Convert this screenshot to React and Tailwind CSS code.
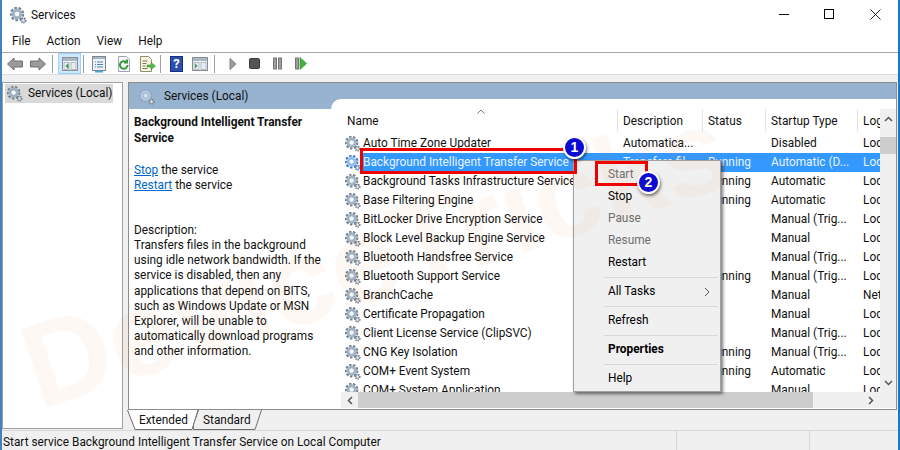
import React from "react";

function Gear({ size = 16, dim = false, dense = false }) {
  const teeth = dense ? "#3d78c4" : dim ? "#8fa6bf" : "#76828e";
  const ring = dense ? "#9cc4ee" : dim ? "#b6cbdf" : "#9fb4c9";
  return (
    <svg width={size} height={size} viewBox="0 0 16 16" className="shrink-0">
      <circle cx="6.6" cy="6.6" r="5.2" fill="none" stroke={teeth} strokeWidth="3.2" strokeDasharray="2.2 1.4" />
      <circle cx="6.6" cy="6.6" r="4" fill="none" stroke={ring} strokeWidth="2.2" />
      <circle cx="6.6" cy="6.6" r="2.6" fill={dim ? "#cfdeec" : "#f4f8fc"} />
      <circle cx="6.6" cy="6.6" r="2.7" fill="none" stroke={teeth} strokeWidth="0.6" />
      <circle cx="12.6" cy="12.6" r="2.1" fill="#e6ebf0" stroke={dense ? "#3d78c4" : "#6f7b88"} strokeWidth="1.8" strokeDasharray="1.2 0.7" />
    </svg>
  );
}

const rows = [
  ["Auto Time Zone Updater", "Automatica...", "", "Disabled", "Loc"],
  ["Background Intelligent Transfer Service", "Transfers fil...", "Running", "Automatic (D...", "Loc"],
  ["Background Tasks Infrastructure Service", "", "Running", "Automatic", "Loc"],
  ["Base Filtering Engine", "", "Running", "Automatic", "Loc"],
  ["BitLocker Drive Encryption Service", "", "", "Manual (Trig...", "Loc"],
  ["Block Level Backup Engine Service", "", "", "Manual", "Loc"],
  ["Bluetooth Handsfree Service", "", "", "Manual (Trig...", "Loc"],
  ["Bluetooth Support Service", "", "Running", "Manual (Trig...", "Loc"],
  ["BranchCache", "", "", "Manual", "Net"],
  ["Certificate Propagation", "", "", "Manual", "Loc"],
  ["Client License Service (ClipSVC)", "", "", "Manual (Trig...", "Loc"],
  ["CNG Key Isolation", "", "Running", "Manual (Trig...", "Loc"],
  ["COM+ Event System", "", "Running", "Automatic", "Loc"],
  ["COM+ System Application", "", "", "Manual", "Loc"],
];

const descLines = [
  "Transfers files in the background",
  "using idle network bandwidth. If the",
  "service is disabled, then any",
  "applications that depend on BITS,",
  "such as Windows Update or MSN",
  "Explorer, will be unable to",
  "automatically download programs",
  "and other information.",
];

function ToolSep({ className }) {
  return <div className={"w-px h-[18px] bg-[#a0a0a0] shrink-0 " + className} />;
}

function Win() {
  return (
    <>
      <rect x="1.5" y="2.5" width="15" height="13" fill="#f4f6f8" stroke="#8a8f96" />
      <rect x="2" y="3" width="14" height="3" fill="#a9b6c4" />
      <rect x="3" y="7.5" width="5" height="7" fill="#e8eef5" stroke="#9aa3ad" strokeWidth="0.7" />
      <rect x="10" y="7.5" width="5" height="7" fill="#e8eef5" stroke="#9aa3ad" strokeWidth="0.7" />
    </>
  );
}

function Toolbar() {
  return (
    <div className="h-[22px] shrink-0 bg-white flex items-center pl-[5px] border-b border-[#dcdcdc]">
      <svg width="16" height="14" viewBox="0 0 16 14" className="shrink-0">
        <path d="M0.5 7 L7 1 V4 H15.5 V10 H7 V13 Z" fill="#9a9a9a" stroke="#6f6f6f" />
      </svg>
      <svg width="16" height="14" viewBox="0 0 16 14" className="ml-[7px] shrink-0">
        <path d="M15.5 7 L9 1 V4 H0.5 V10 H9 V13 Z" fill="#9a9a9a" stroke="#6f6f6f" />
      </svg>
      <ToolSep className="ml-[6px]" />
      <div className="ml-[5px] w-[23px] h-[21px] flex items-center justify-center bg-[#cce8ff] border border-[#99d1ff]">
        <svg width="18" height="18" viewBox="0 0 18 18">
          <Win />
          <path d="M7.5 8 L4.5 11 L7.5 14 Z" fill="#2f9e44" />
        </svg>
      </div>
      <ToolSep className="ml-[2px]" />
      <svg width="18" height="18" viewBox="0 0 18 18" className="ml-[6px] shrink-0">
        <rect x="2.5" y="1.5" width="13" height="14" fill="#eef1f4" stroke="#7c8792" />
        <rect x="3" y="2" width="12" height="2" fill="#aab5c0" />
        <path d="M5 7h1M7 7h6M5 9.5h1M7 9.5h6M5 12h1M7 12h6" stroke="#4a86c8" />
        <rect x="5" y="16" width="8" height="1.5" fill="#3fa9e8" />
      </svg>
      <svg width="18" height="18" viewBox="0 0 18 18" className="ml-[7px] shrink-0">
        <path d="M3.5 1.5h8l3 3v12h-11z" fill="#f6f7f8" stroke="#a0a6ac" />
        <path d="M12.5 10a3.8 3.8 0 1 1 -1.2 -2.8 M12 4.5 v3 h-3" fill="none" stroke="#3a9a3a" strokeWidth="2" />
      </svg>
      <svg width="18" height="18" viewBox="0 0 18 18" className="ml-[5px] shrink-0">
        <path d="M2.5 1.5h8l3 3v12h-11z" fill="#fbf7dc" stroke="#8f8f78" />
        <path d="M4.5 6h5M4.5 8.5h4M4.5 11h3M4.5 13.5h5" stroke="#77776a" />
        <path d="M9 10h4V7.5L17.5 11 13 14.5V12H9z" fill="#58b84a" stroke="#3f8f36" strokeWidth="0.6" />
      </svg>
      <ToolSep className="ml-[4px]" />
      <div className="ml-[9px] w-[13px] h-[16px] shrink-0 bg-[#2a4fae] border border-[#16307a] text-white font-bold text-[13px] leading-[14px] text-center">?</div>
      <svg width="18" height="18" viewBox="0 0 18 18" className="ml-[8px] shrink-0">
        <Win />
        <path d="M4 8.5 L6.5 11 L4 13.5 Z" fill="#2f9e44" />
      </svg>
      <ToolSep className="ml-[5px]" />
      <svg width="8" height="14" viewBox="0 0 8 14" className="ml-[14px] shrink-0">
        <path d="M1 1.5 L7 7 L1 12.5 Z" fill="#9c9c9c" stroke="#808080" />
      </svg>
      <svg width="11" height="11" viewBox="0 0 11 11" className="ml-[12px] shrink-0">
        <rect x="0.5" y="0.5" width="10" height="10" rx="1.5" fill="#555" stroke="#3d3d3d" />
      </svg>
      <svg width="9" height="13" viewBox="0 0 9 13" className="ml-[13px] shrink-0">
        <rect x="0.5" y="1" width="3" height="11" fill="#9c9c9c" stroke="#777" />
        <rect x="5.5" y="1" width="3" height="11" fill="#9c9c9c" stroke="#777" />
      </svg>
      <svg width="12" height="13" viewBox="0 0 12 13" className="ml-[13px] shrink-0">
        <rect x="0.5" y="1" width="3" height="11" fill="#9c9c9c" stroke="#777" />
        <path d="M5 0.5 L11.5 6.5 L5 12.5 Z" fill="#3fb43f" stroke="#2b902b" strokeWidth="0.7" />
      </svg>
    </div>
  );
}

function Row({ r, selected }) {
  return (
    <div className="h-[19px] flex items-center whitespace-nowrap shrink-0">
      <div className="w-[16px] ml-[14px] shrink-0 flex items-center"><Gear dense={selected} size={16} /></div>
      <div className={"flex flex-1 h-[19px] leading-[19px] " + (selected ? "bg-[#3399ff] text-[#e9f3fd]" : "")}>
        <div className="w-[262px] pl-[2px] shrink-0">{r[0]}</div>
        <div className="w-[85px] shrink-0 overflow-hidden">{r[1]}</div>
        <div className="w-[63px] shrink-0 overflow-hidden">{r[2]}</div>
        <div className="w-[92px] shrink-0 overflow-hidden">{r[3]}</div>
        <div className="flex-1 overflow-hidden">{r[4]}</div>
      </div>
    </div>
  );
}

function MenuItem({ children, disabled, bold, arrow }) {
  return (
    <div className={"h-[22px] flex items-center pl-[34px] pr-[10px] justify-between " + (disabled ? "text-[#6f6f6f] " : "text-black ") + (bold ? "font-bold" : "")}>
      <span>{children}</span>
      {arrow && (
        <svg width="6" height="10" viewBox="0 0 6 10"><path d="M1 1 L5 5 L1 9" fill="none" stroke="#555" /></svg>
      )}
    </div>
  );
}

function MenuSep() {
  return <div className="h-px bg-[#d7d7d7] ml-[30px] mr-[2px] my-[3px]" />;
}

function Badge({ n, className }) {
  return (
    <div className={"absolute w-[23px] h-[23px] rounded-full bg-[#0a0ad2] border-[2px] border-white text-white font-bold text-[14px] leading-[19px] text-center shadow-[1px_2px_3px_rgba(0,0,0,0.5)] font-['Liberation_Sans',sans-serif] " + className}>{n}</div>
  );
}

function Head({ w, children }) {
  return (
    <div className={"relative shrink-0 " + w}>
      <i className="absolute -left-[6px] -top-[5px] w-px h-[23px] bg-[#e5e5e5]" />
      {children}
    </div>
  );
}

export default function App() {
  return (
    <div className="relative w-[900px] h-[450px] bg-[#f0f0f0] overflow-hidden text-[11.85px] text-[#111] flex flex-col border-x-2 border-l-[#3f82c0] border-r-[#1878c8] font-['Roboto',sans-serif]">
      <div className="h-[33px] bg-white flex items-center pl-[8px] pb-[2px] shrink-0 relative">
        <Gear size={17} />
        <span className="ml-[4px]">Services</span>
        <div className="absolute left-[777px] top-[9px] flex items-center h-[10px]">
          <div className="w-[10px] h-px bg-black" />
          <div className="w-[10px] h-[10px] border border-black ml-[35px]" />
          <svg width="11" height="11" viewBox="0 0 11 11" className="ml-[36px]"><path d="M0.5 0.5 L10.5 10.5 M10.5 0.5 L0.5 10.5" stroke="#111" strokeWidth="0.9" /></svg>
        </div>
      </div>
      <div className="h-[20px] bg-white flex items-center pl-[10px] pb-[2px] gap-[16px] border-b border-[#a8a8a8] shrink-0">
        <span>File</span><span>Action</span><span>View</span><span>Help</span>
      </div>
      <Toolbar />
      <div className="flex-1 flex min-h-0 pt-[7px]">
        <div className="w-[121px] shrink-0 bg-white border border-[#a0a0a0] mb-[1px] pt-px">
          <div className="mx-[2px] h-[19px] bg-[#d9d9d9] flex items-center w-[108px] pl-[2px] whitespace-nowrap">
            <Gear size={16} />
            <span className="ml-[5px]">Services (Local)</span>
          </div>
        </div>
        <div className="ml-[5px] flex-1 flex flex-col min-w-0 pr-px">
          <div className="flex-1 min-h-0 flex flex-col border border-[#8c8c8c] bg-white">
            <div className="h-[26px] bg-[#98b3cf] flex items-center pl-[10px] pt-px shrink-0">
              <Gear size={16} dim />
              <span className="ml-[9px]">Services (Local)</span>
            </div>
            <div className="flex-1 min-h-0 flex">
              <div className="w-[202px] shrink-0 bg-white pl-[5px] pt-[5px] leading-[15px] whitespace-nowrap">
                <div className="font-bold leading-[16px]">Background Intelligent Transfer<br />Service</div>
                <div className="mt-[17px]"><span className="text-[#0066cc] underline">Stop</span> the service</div>
                <div><span className="text-[#0066cc] underline">Restart</span> the service</div>
                <div className="mt-[30px]">Description:</div>
                {descLines.map((l) => <div key={l} className="leading-[15.2px]">{l}</div>)}
              </div>
              <div className="flex-1 min-w-0 flex flex-col bg-[#98b3cf] -mt-[10px] relative">
                <div className="flex-1 min-h-0 flex flex-col bg-white rounded-tl-[10px] overflow-hidden">
                  <div className="flex-1 min-h-0 flex">
                    <div className="flex-1 min-w-0 flex flex-col overflow-hidden">
                      <div className="h-[35px] shrink-0 flex pt-[15px] leading-[15px] whitespace-nowrap relative">
                        <svg width="8" height="5" viewBox="0 0 8 5" className="absolute left-[146px] top-[10px]"><path d="M0.5 4.5 L4 1 L7.5 4.5" fill="none" stroke="#777" /></svg>
                        <div className="w-[292px] pl-[16px] shrink-0">Name</div>
                        <Head w="w-[85px]">Description</Head>
                        <Head w="w-[63px]">Status</Head>
                        <Head w="w-[92px]">Startup Type</Head>
                        <Head w="w-[30px]">Log</Head>
                      </div>
                      {rows.map((r, i) => <Row key={r[0]} r={r} selected={i === 1} />)}
                    </div>
                    <div className="w-[16px] mt-[10px] shrink-0 bg-[#f0f0f0] flex flex-col items-center pt-[7px] pb-[6px]">
                      <svg width="9" height="6" viewBox="0 0 9 6" className="shrink-0"><path d="M1 5 L4.5 1.5 L8 5" fill="none" stroke="#555" strokeWidth="1.5" /></svg>
                      <div className="w-full h-[17px] bg-[#cdcdcd] mt-[15px] shrink-0" />
                      <div className="flex-1" />
                      <svg width="9" height="6" viewBox="0 0 9 6" className="shrink-0"><path d="M1 1 L4.5 4.5 L8 1" fill="none" stroke="#555" strokeWidth="1.5" /></svg>
                    </div>
                  </div>
                  <div className="h-[16px] ml-[10px] mb-px shrink-0 bg-[#f0f0f0] flex items-center">
                    <div className="w-[17px] flex justify-center"><svg width="6" height="9" viewBox="0 0 6 9"><path d="M5 1 L1.5 4.5 L5 8" fill="none" stroke="#555" strokeWidth="1.5" /></svg></div>
                    <div className="w-[455px] h-full bg-[#cdcdcd]" />
                    <div className="flex-1" />
                    <div className="w-[17px] mr-[17px] flex justify-center"><svg width="6" height="9" viewBox="0 0 6 9"><path d="M1 1 L4.5 4.5 L1 8" fill="none" stroke="#555" strokeWidth="1.5" /></svg></div>
                  </div>
                </div>
              </div>
            </div>
          </div>
          <div className="h-[20px] shrink-0 flex items-start -ml-px">
            <div className="relative w-[71px] h-[20px] pl-[12px] leading-[21px] z-10">
              <svg width="72" height="20" viewBox="0 0 72 20" className="absolute left-0 top-0 -z-10"><path d="M0.5 0 L8 19.5 H65 L71 0" fill="#fff" stroke="#6f6f6f" /></svg>
              Extended
            </div>
            <div className="relative w-[68px] h-[20px] -ml-[5px] pl-[10px] leading-[21px]">
              <svg width="69" height="20" viewBox="0 0 69 20" className="absolute left-0 top-0"><path d="M5.5 0 L0.5 14 V19.5 H62 L68.5 0" fill="none" stroke="#6f6f6f" /></svg>
              <span className="relative">Standard</span>
            </div>
          </div>
        </div>
      </div>
      <div className="h-[20px] shrink-0 flex border-t border-[#d7d7d7] leading-[22px]">
        <div className="w-[675px] pl-[1px] border-r border-[#d7d7d7]">Start service Background Intelligent Transfer Service on Local Computer</div>
        <div className="w-[133px] border-r border-[#d7d7d7]" />
      </div>

      {/* context menu */}
      <div className="absolute left-[571px] top-[160px] w-[148px] h-[232px] bg-[#f0f0f0] border border-[#a0a0a0] shadow-[2px_2px_3px_rgba(0,0,0,0.5)] pt-[3px]">
        <MenuItem disabled>Start</MenuItem>
        <MenuItem>Stop</MenuItem>
        <MenuItem disabled>Pause</MenuItem>
        <MenuItem disabled>Resume</MenuItem>
        <MenuItem>Restart</MenuItem>
        <MenuSep />
        <MenuItem arrow>All Tasks</MenuItem>
        <MenuSep />
        <MenuItem>Refresh</MenuItem>
        <MenuSep />
        <MenuItem bold>Properties</MenuItem>
        <MenuSep />
        <MenuItem>Help</MenuItem>
      </div>

      {/* annotations */}
      <div className="absolute left-[358px] top-[148px] w-[217px] h-[26px] border-[3px] border-[#ee0000]" />
      <div className="absolute left-[593px] top-[161px] w-[53px] h-[25px] border-[3px] border-[#ee0000]" />
      <Badge n="1" className="left-[561px] top-[136px]" />
      <Badge n="2" className="left-[635px] top-[171px]" />

      {/* watermark */}
      <div className="absolute left-[37px] top-[308px] text-[120px] font-bold text-[#f0701e] opacity-[0.04] -rotate-[18deg] origin-[0_102px] whitespace-nowrap pointer-events-none leading-none font-['Liberation_Sans',sans-serif]">DeviceTricks</div>
    </div>
  );
}
